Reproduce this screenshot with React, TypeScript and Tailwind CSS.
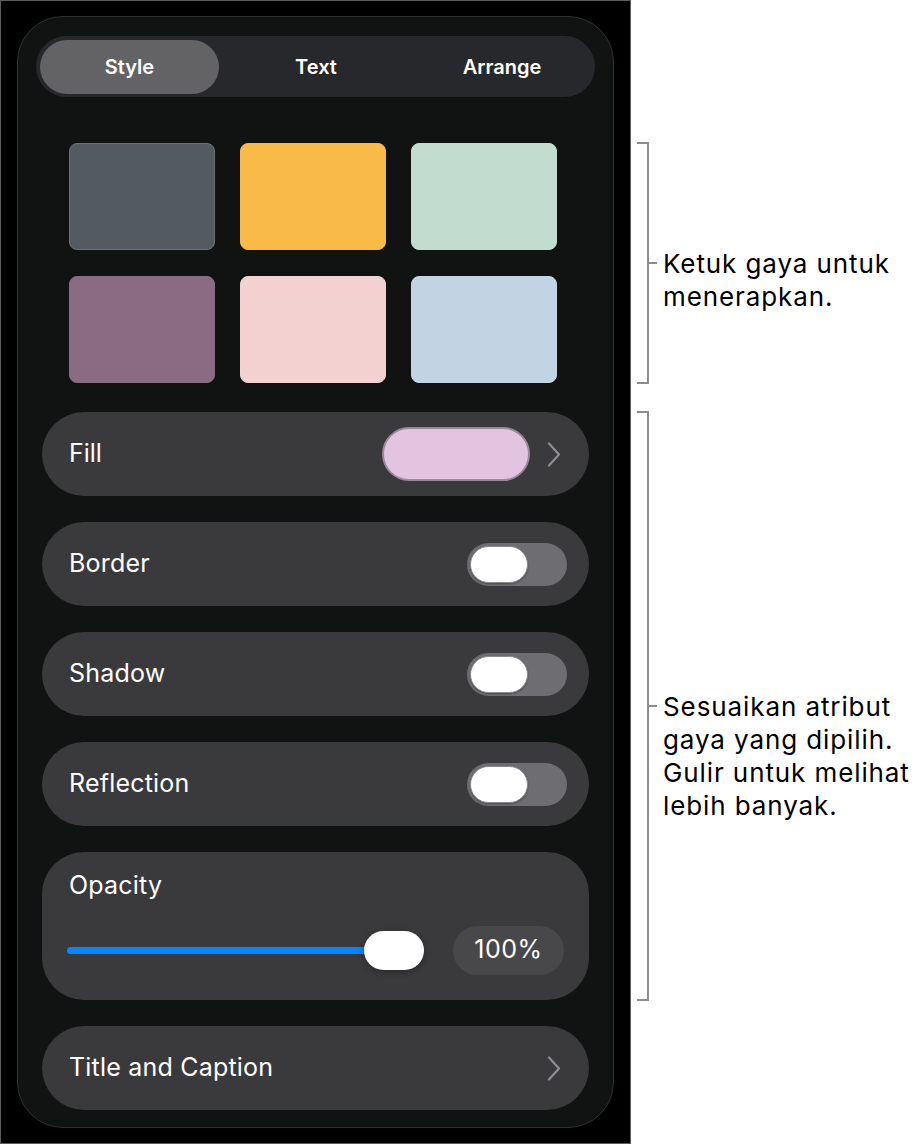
const SWATCHES = [
  { bg: "bg-[#535a62]", ring: "border-[#6b7178]" },
  { bg: "bg-[#f9bb48]", ring: "border-[#f9bb48]" },
  { bg: "bg-[#c2ddd0]", ring: "border-[#c2ddd0]" },
  { bg: "bg-[#8b6b83]", ring: "border-[#8b6b83]" },
  { bg: "bg-[#f3d1d1]", ring: "border-[#f3d1d1]" },
  { bg: "bg-[#c2d4e4]", ring: "border-[#c2d4e4]" },
];

function Chevron() {
  return (
    <svg width="14" height="25" viewBox="0 0 14 25" className="shrink-0" aria-hidden>
      <polyline
        points="2,1.5 12,12.5 2,23.5"
        fill="none"
        stroke="#8d8d92"
        strokeWidth="2.2"
        strokeLinecap="round"
        strokeLinejoin="round"
      />
    </svg>
  );
}

function Toggle() {
  return (
    <div className="flex h-[43px] w-[100px] items-center rounded-full bg-[#6e6d72] px-[3px]">
      <div className="h-[37px] w-[58px] rounded-full border border-[#8a8a8e] bg-white shadow-[0_1px_2px_rgba(0,0,0,0.35)]" />
    </div>
  );
}

function Row({ label, children }: { label: string; children?: React.ReactNode }) {
  return (
    <div className="flex h-[84px] items-center justify-between rounded-full bg-[#3a3a3c] pl-[27px] pr-[22px]">
      <span className="text-[25px] tracking-[0.2px] text-white">{label}</span>
      {children}
    </div>
  );
}

function Bracket({ height, lines }: { height: number; lines: string[] }) {
  // first text line sits on the bracket's middle tick
  return (
    <div className="flex">
      <div
        className="w-[12px] border-y-2 border-r-2 border-[#8c8c8c]"
        style={{ height }}
      />
      <div className="flex items-start" style={{ paddingTop: height / 2 - 16 }}>
        <div className="mt-[15px] h-[2px] w-[8px] bg-[#8c8c8c]" />
        <div className="ml-[6px] text-[26px] leading-[33px] tracking-[0.9px] text-black">
          {lines.map((l) => (
            <div key={l}>{l}</div>
          ))}
        </div>
      </div>
    </div>
  );
}

export default function App() {
  return (
    <div className="flex h-[1146px] w-[920px] bg-white font-['Inter',sans-serif]">
      {/* device frame */}
      <div className="h-[1144px] w-[631px] shrink-0 border border-[#5c5c5c] bg-black pl-[16px] pr-[16px] pt-[15px]">
        <div className="flex h-[1112px] flex-col rounded-[46px] border border-[#2f3032] bg-[#111212] px-[24px] pt-[19px]">
          {/* segmented control */}
          <div className="mx-[-6px] flex h-[61px] items-center rounded-full bg-[#27282b] p-[4px]">
            <div className="flex h-[54px] w-[179px] items-center justify-center rounded-full bg-[#636366] text-[20px] font-semibold text-white">
              Style
            </div>
            <div className="flex flex-1 items-center justify-center pl-[8px] text-[20px] font-semibold text-white">
              Text
            </div>
            <div className="flex flex-1 items-center justify-center pl-[8px] text-[20px] font-semibold text-white">
              Arrange
            </div>
          </div>

          {/* style swatches */}
          <div className="ml-[27px] mt-[46px] grid grid-cols-[146px_146px_146px] gap-x-[25px] gap-y-[26px]">
            {SWATCHES.map((s, i) => (
              <div
                key={i}
                className={`h-[107px] rounded-[8px] border ${s.bg} ${s.ring}`}
              />
            ))}
          </div>

          {/* attributes */}
          <div className="mt-[29px] flex flex-col gap-[26px]">
            <div className="flex h-[84px] items-center rounded-full bg-[#3a3a3c] pl-[27px] pr-[28px]">
              <span className="flex-1 text-[25px] text-white">Fill</span>
              <div className="h-[54px] w-[148px] rounded-full border-2 border-[#9a8a99] bg-[#e2c4e1]" />
              <div className="ml-[17px]">
                <Chevron />
              </div>
            </div>
            <Row label="Border">
              <Toggle />
            </Row>
            <Row label="Shadow">
              <Toggle />
            </Row>
            <Row label="Reflection">
              <Toggle />
            </Row>

            <div className="flex h-[148px] flex-col rounded-[42px] bg-[#3a3a3c] pl-[25px] pr-[25px] pt-[15px]">
              <span className="pl-[2px] text-[25px] tracking-[0.2px] text-white">Opacity</span>
              <div className="mt-[21px] flex items-center">
                <div className="flex w-[357px] items-center">
                  <div className="h-[7px] flex-1 rounded-full bg-[#0a84ff]" />
                  <div className="-ml-[6px] h-[39px] w-[60px] rounded-full bg-white shadow-[0_2px_6px_rgba(0,0,0,0.3)]" />
                </div>
                <div className="ml-auto flex h-[49px] w-[111px] items-center justify-center rounded-full bg-[#48484a] text-[25px] tracking-[0.5px] text-white">
                  100%
                </div>
              </div>
            </div>

            <div className="flex h-[84px] items-center rounded-full bg-[#3a3a3c] pl-[27px] pr-[28px]">
              <span className="flex-1 text-[25px] tracking-[0.2px] text-white">Title and Caption</span>
              <Chevron />
            </div>
          </div>
        </div>
      </div>

      {/* callouts */}
      <div className="flex flex-col pl-[6px] pt-[142px]">
        <Bracket height={242} lines={["Ketuk gaya untuk", "menerapkan."]} />
        <div className="mt-[27px]">
          <Bracket
            height={590}
            lines={["Sesuaikan atribut", "gaya yang dipilih.", "Gulir untuk melihat", "lebih banyak."]}
          />
        </div>
      </div>
    </div>
  );
}
